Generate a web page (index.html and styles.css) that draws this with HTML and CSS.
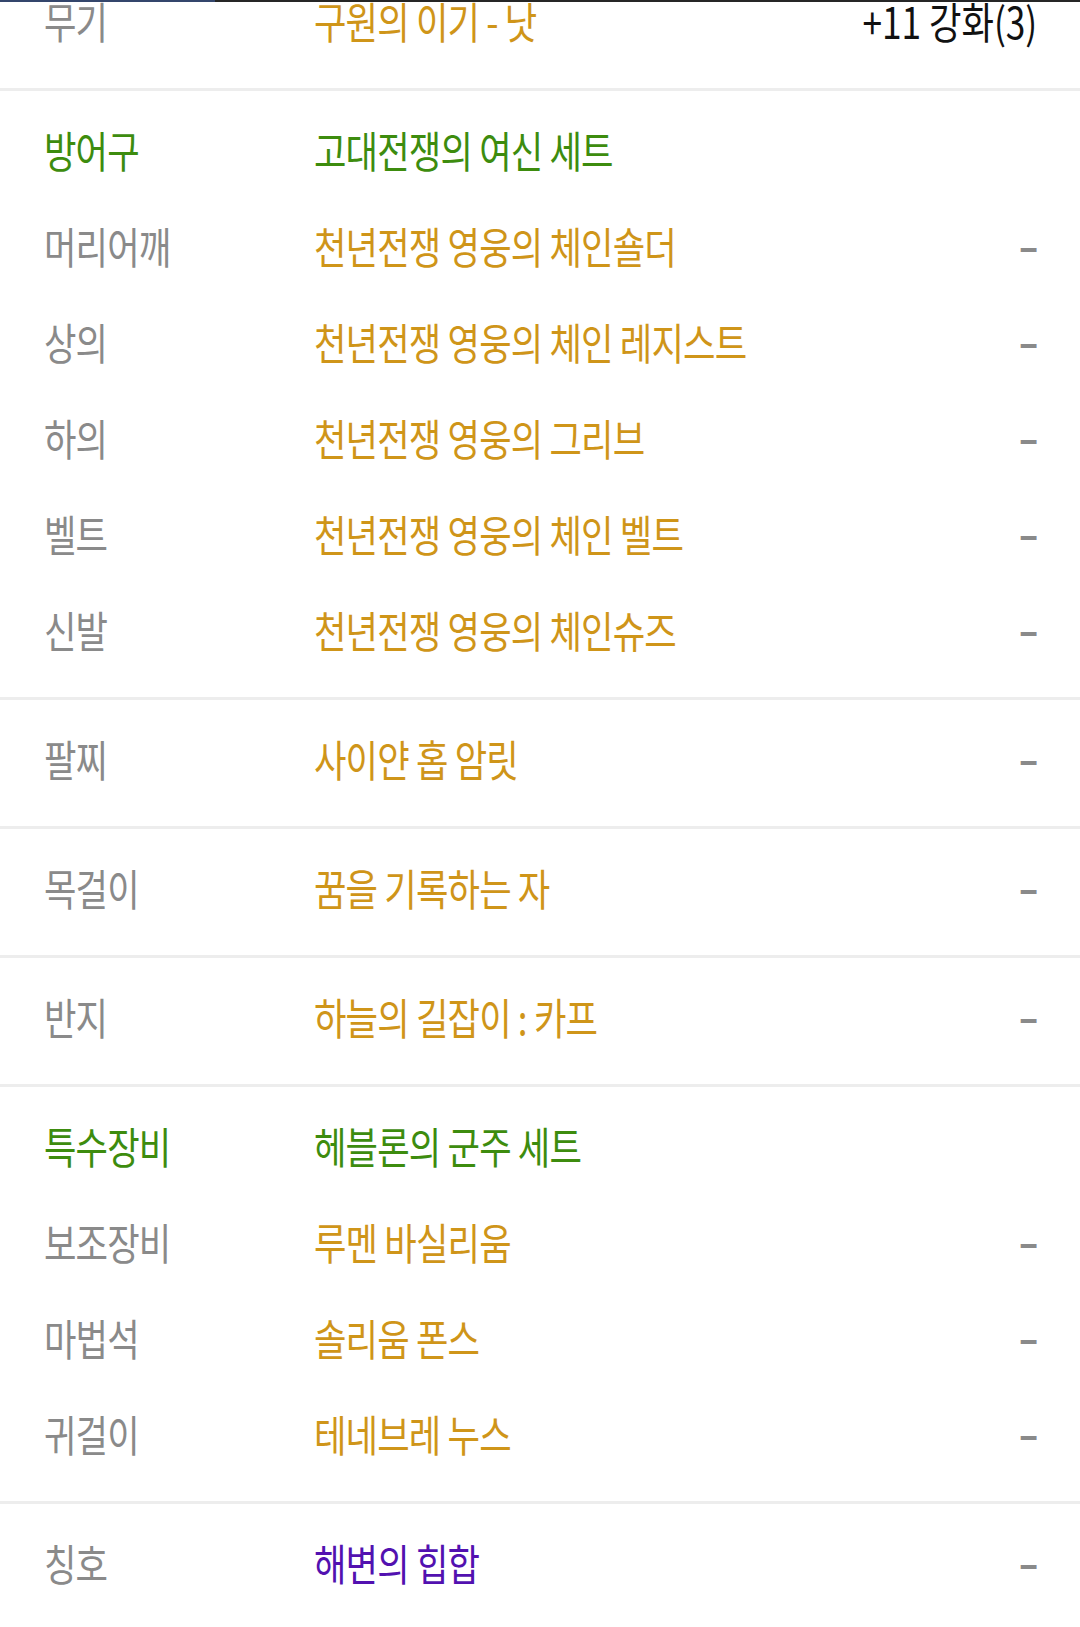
FILE: index.html
```html
<!DOCTYPE html>
<html>
<head lang="ko">
  <meta charset="UTF-8">
  <title>장비</title>
  <link rel="stylesheet" href="styles.css">
</head>
<body>
<div class="page">
  <div class="topline"></div>
  <div class="list">
    <div class="group">
      <div class="row"><span class="label">무기</span><span class="name gold">구원의 이기 - 낫</span><span class="extra">+11 강화(3)</span></div>
    </div>
    <div class="group">
      <div class="row"><span class="label green">방어구</span><span class="name green">고대전쟁의 여신 세트</span></div>
      <div class="row"><span class="label">머리어깨</span><span class="name gold">천년전쟁 영웅의 체인숄더</span><span class="dash">–</span></div>
      <div class="row"><span class="label">상의</span><span class="name gold">천년전쟁 영웅의 체인 레지스트</span><span class="dash">–</span></div>
      <div class="row"><span class="label">하의</span><span class="name gold">천년전쟁 영웅의 그리브</span><span class="dash">–</span></div>
      <div class="row"><span class="label">벨트</span><span class="name gold">천년전쟁 영웅의 체인 벨트</span><span class="dash">–</span></div>
      <div class="row"><span class="label">신발</span><span class="name gold">천년전쟁 영웅의 체인슈즈</span><span class="dash">–</span></div>
    </div>
    <div class="group">
      <div class="row"><span class="label">팔찌</span><span class="name gold">사이얀 홉 암릿</span><span class="dash">–</span></div>
    </div>
    <div class="group">
      <div class="row"><span class="label">목걸이</span><span class="name gold">꿈을 기록하는 자</span><span class="dash">–</span></div>
    </div>
    <div class="group">
      <div class="row"><span class="label">반지</span><span class="name gold">하늘의 길잡이 : 카프</span><span class="dash">–</span></div>
    </div>
    <div class="group">
      <div class="row"><span class="label green">특수장비</span><span class="name green">헤블론의 군주 세트</span></div>
      <div class="row"><span class="label">보조장비</span><span class="name gold">루멘 바실리움</span><span class="dash">–</span></div>
      <div class="row"><span class="label">마법석</span><span class="name gold">솔리움 폰스</span><span class="dash">–</span></div>
      <div class="row"><span class="label">귀걸이</span><span class="name gold">테네브레 누스</span><span class="dash">–</span></div>
    </div>
    <div class="group">
      <div class="row"><span class="label">칭호</span><span class="name purple">해변의 힙합</span><span class="dash">–</span></div>
    </div>
  </div>
</div>
</body>
</html>
```

FILE: styles.css
```css
body {
  margin: 0;
  background: #ffffff;
  font-family: "Noto Sans CJK KR", "Noto Sans", sans-serif;
}

.page {
  width: 1080px;
  overflow: hidden;
}

.topline {
  height: 2px;
  background: linear-gradient(to right, #34466c 0px, #34466c 215px, #262626 215px);
}

.list {
  margin-top: -40px;
}

.group {
  padding: 15px 0px;
  border-bottom: 3px solid #ededed;
}

.group:last-child {
  border-bottom: 0px;
}

.row {
  box-sizing: border-box;
  display: flex;
  align-items: center;
  height: 96px;
  padding: 0px 43px 10px 44px;
  font-size: 43px;
  line-height: 43px;
  letter-spacing: -1px;
}

.row span {
  display: inline-block;
  white-space: nowrap;
  transform: scaleX(0.82);
  transform-origin: left center;
}

.row .label {
  width: 270px;
  flex-shrink: 0;
  color: #8a8a8a;
}

.row .name {
  flex: 1;
}

.row .extra,
.row .dash {
  transform-origin: right center;
  color: #111111;
}

.row .extra {
  letter-spacing: 0px;
}

.row .dash {
  color: #8a8a8a;
  font-weight: 700;
  margin-top: -4px;
}

.row .gold {
  color: #cf9519;
}

.row .green {
  color: #3d8c0e;
}

.row .purple {
  color: #5211b0;
}
```
